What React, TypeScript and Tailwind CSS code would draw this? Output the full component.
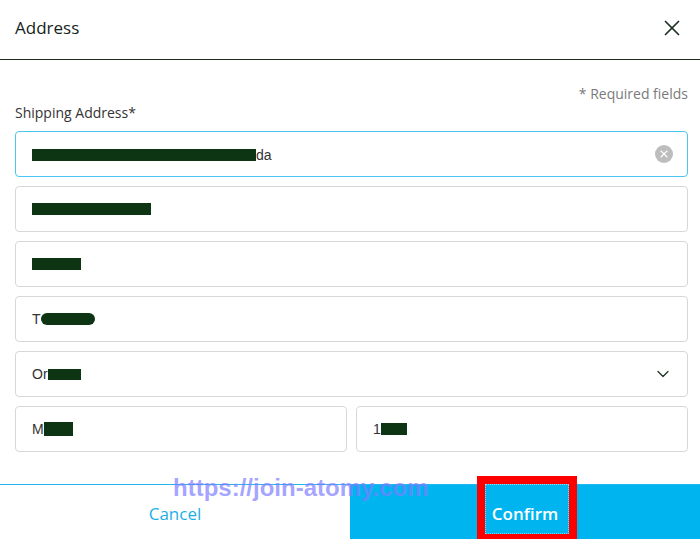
import { ChevronDown, X } from "lucide-react";

const font = { fontFamily: '"Open Sans", "Noto Sans", sans-serif' };

function Redact({ className }: { className: string }) {
  return <span className={`inline-block bg-[#0e3513] align-middle ${className}`} />;
}

function Field({
  children,
  focused,
  className = "",
}: {
  children: React.ReactNode;
  focused?: boolean;
  className?: string;
}) {
  return (
    <div
      className={`h-[46px] rounded-[4px] border flex items-center pl-[16px] pr-[14px] text-[14px] text-[#333] font-['Liberation_Sans',Arial,sans-serif] ${
        focused ? "border-[#4cc6f2] border-[1.5px]" : "border-[#d6d8d8]"
      } ${className}`}
    >
      {children}
    </div>
  );
}

export default function App() {
  return (
    <div className="relative w-full h-[539px] overflow-hidden bg-white flex flex-col" style={font}>
      {/* Header */}
      <div className="h-[60px] shrink-0 border-b border-[#1d2b1f] flex items-center justify-between pl-[15px] pr-[15px] pb-[3px]">
        <h1 className="text-[17px] font-medium text-[#14241a]">Address</h1>
        <X className="w-[26px] h-[26px] text-[#1d3322]" strokeWidth={1.6} />
      </div>

      {/* Form */}
      <div className="pl-[15px] pr-[12px] pt-[24px]">
        <p className="text-right text-[14px] leading-[19px] text-[#7a7a7a]">* Required fields</p>
        <p className="text-[14px] leading-[19px] text-[#333] mb-[9px]">Shipping Address*</p>

        <div className="flex flex-col gap-[9px]">
          <Field focused className="justify-between">
            <span className="flex items-center pt-[2px]">
              <Redact className="w-[224px] h-[12px]" />
              <span>da</span>
            </span>
            <span className="w-[18px] h-[18px] rounded-full bg-[#bdbdbd] flex items-center justify-center">
              <X className="w-[12px] h-[12px] text-white" strokeWidth={2.2} />
            </span>
          </Field>
          <Field>
            <Redact className="w-[119px] h-[12px]" />
          </Field>
          <Field>
            <Redact className="w-[49px] h-[12px]" />
          </Field>
          <Field>
            <span>T</span>
            <Redact className="w-[54px] h-[12px] rounded-full" />
          </Field>
          <Field className="justify-between">
            <span className="flex items-center">
              <span>Or</span>
              <Redact className="w-[33px] h-[11px]" />
            </span>
            <ChevronDown className="w-[20px] h-[20px] text-[#1d3322]" strokeWidth={1.5} />
          </Field>
          <div className="flex gap-[9px]">
            <Field className="flex-1">
              <span>M</span>
              <Redact className="w-[29px] h-[14px]" />
            </Field>
            <Field className="flex-1">
              <span>1</span>
              <Redact className="w-[26px] h-[12px]" />
            </Field>
          </div>
        </div>
      </div>

      {/* Footer */}
      <div className="mt-[32px] h-[58px] shrink-0 flex border-t border-[#22b6ee]">
        <button className="flex-1 flex items-center justify-center text-[17px] text-[#1eaee6] bg-white">
          Cancel
        </button>
        <button className="flex-1 flex items-center justify-center text-[17px] font-semibold text-white bg-[#00b5ef]">
          Confirm
        </button>
      </div>

      {/* Annotation overlays */}
      <div className="absolute left-[477px] top-[476px] w-[100px] h-[66px] border-[8px] border-[#ff0000]">
        <div className="w-full h-full border border-dotted border-white/50" />
      </div>
      <div className="absolute left-[173px] top-[473px] text-[24px] leading-[30px] font-bold text-[#7d7dff]/70 font-['Liberation_Sans',Arial,sans-serif] pointer-events-none">
        https://join-atomy.com
      </div>
    </div>
  );
}
